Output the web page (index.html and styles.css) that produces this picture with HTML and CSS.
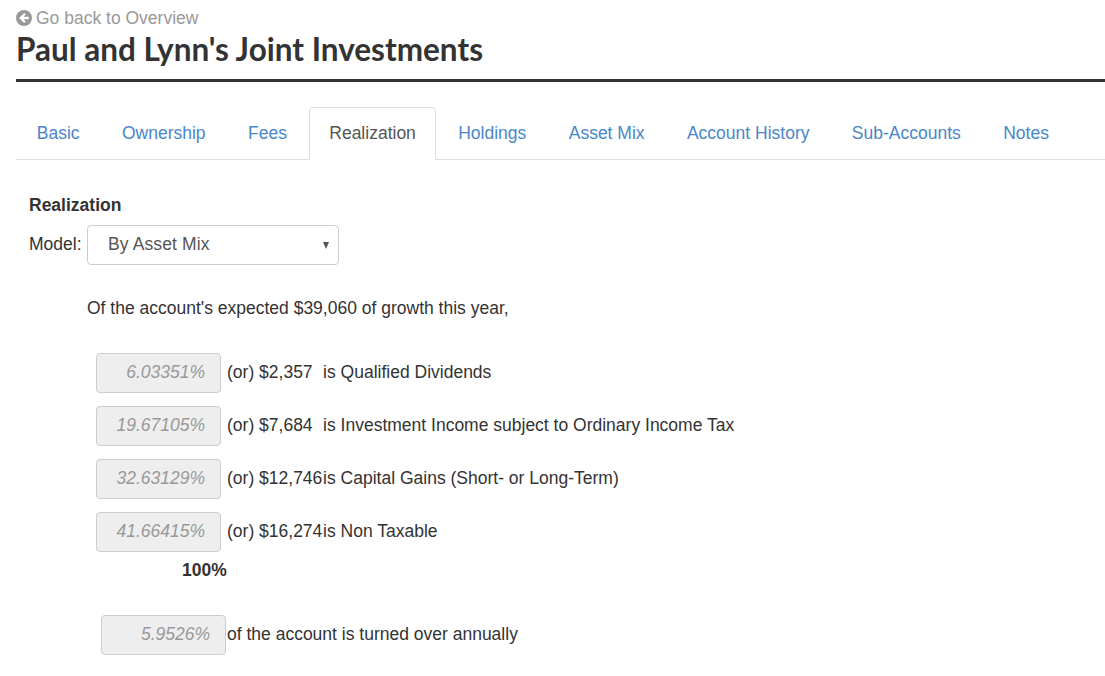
FILE: index.html
```html
<!DOCTYPE html>
<html lang="en">
<head>
<meta charset="utf-8">
<title>Paul and Lynn's Joint Investments</title>
<link rel="stylesheet" href="styles.css">
</head>
<body>
<main class="page">
  <a class="back" href="#"><svg class="back-icon" viewBox="0 0 16 16" aria-hidden="true"><circle cx="8" cy="8" r="8" fill="#999"/><path d="M8.2 3 3.2 8l5 5 1.5-1.5L7.4 9.2H12.8V6.8H7.4L9.7 4.5z" fill="#fff"/></svg>Go back to Overview</a>
  <h1 class="title">Paul and Lynn's Joint Investments</h1>
  <ul class="tabs">
    <li><a href="#">Basic</a></li>
    <li><a href="#">Ownership</a></li>
    <li><a href="#">Fees</a></li>
    <li class="active"><a href="#">Realization</a></li>
    <li><a href="#">Holdings</a></li>
    <li><a href="#">Asset Mix</a></li>
    <li><a href="#">Account History</a></li>
    <li><a href="#">Sub-Accounts</a></li>
    <li><a href="#">Notes</a></li>
  </ul>
  <section class="panel">
    <h2 class="heading">Realization</h2>
    <div class="model">
      <label class="model-label">Model:</label>
      <div class="select"><span>By Asset Mix</span><i class="caret"></i></div>
    </div>
    <p class="intro">Of the account's expected $39,060 of growth this year,</p>
    <div class="rows">
      <div class="row"><div class="pct">6.03351%</div><span class="or">(or) <span class="amt">$2,357</span>is Qualified Dividends</span></div>
      <div class="row"><div class="pct">19.67105%</div><span class="or">(or) <span class="amt">$7,684</span>is Investment Income subject to Ordinary Income Tax</span></div>
      <div class="row"><div class="pct">32.63129%</div><span class="or">(or) <span class="amt">$12,746</span>is Capital Gains (Short- or Long-Term)</span></div>
      <div class="row"><div class="pct">41.66415%</div><span class="or">(or) <span class="amt">$16,274</span>is Non Taxable</span></div>
    </div>
    <div class="total">100%</div>
    <div class="turnover"><div class="pct">5.9526%</div><span class="turn-text">of the account is turned over annually</span></div>
  </section>
</main>
</body>
</html>
```
FILE: styles.css
```css
* { box-sizing: border-box; }
html, body { margin: 0; height: 100%; overflow: hidden; background: #fff; }
body { font-family: "Liberation Sans", Arial, sans-serif; font-size: 17.5px; color: #333; }
.page { padding: 8px 0 0 16px; }
.back { display: flex; align-items: center; height: 20px; color: #999; text-decoration: none; line-height: 20px; }
.back-icon { width: 16px; height: 16px; margin-right: 4px; }
.title { margin: 3px 0 0; font-family: Lato, sans-serif; font-weight: 700; font-size: 31.5px; line-height: 36px; height: 51px; color: #333; border-bottom: 3px solid #333; }
.tabs { display: flex; list-style: none; margin: 25px 0 0; padding: 0 0 0 0.6px; height: 53px; border-bottom: 1px solid #ddd; }
.tabs li { margin-right: 2px; height: 53px; }
.tabs a { display: block; height: 53px; padding: 13px 19.2px; line-height: 24px; border: 1px solid transparent; border-radius: 4px 4px 0 0; color: #4a86c8; text-decoration: none; }
.tabs .active a { color: #555; background: #fff; border-color: #ddd #ddd #fff; }
.panel { padding: 34px 0 0 13px; }
.heading { margin: 0; font-size: 17.5px; line-height: 22px; font-weight: 700; color: #333; }
.model { display: flex; align-items: center; margin-top: 9px; }
.model-label { width: 58px; padding-bottom: 2px; color: #333; }
.select { display: flex; align-items: center; justify-content: space-between; width: 252px; height: 40px; padding: 0 9px 2px 20px; border: 1px solid #ccc; border-radius: 4px; color: #555; letter-spacing: 0.12px; }
.caret { width: 0; height: 0; margin-top: 2px; border-left: 3.5px solid transparent; border-right: 3.5px solid transparent; border-top: 7px solid #555; }
.intro { margin: 32px 0 0 58px; line-height: 22px; color: #333; }
.rows { display: flex; flex-direction: column; gap: 13px; margin: 34px 0 0 67px; }
.row { display: flex; align-items: center; }
.pct { width: 125px; height: 40px; padding: 0 15px 0 0; line-height: 36px; text-align: right; font-style: italic; color: #999; background: #eee; border: 1px solid #ccc; border-radius: 4px; }
.or { margin-left: 6px; padding-bottom: 2px; white-space: nowrap; color: #333; }
.amt { display: inline-block; width: 64px; }
.total { margin: 7px 0 0 153px; line-height: 22px; font-weight: 700; color: #333; }
.turnover { display: flex; align-items: center; margin: 34px 0 0 72px; }
.turn-text { margin-left: 1px; padding-bottom: 2px; color: #333; }
```
